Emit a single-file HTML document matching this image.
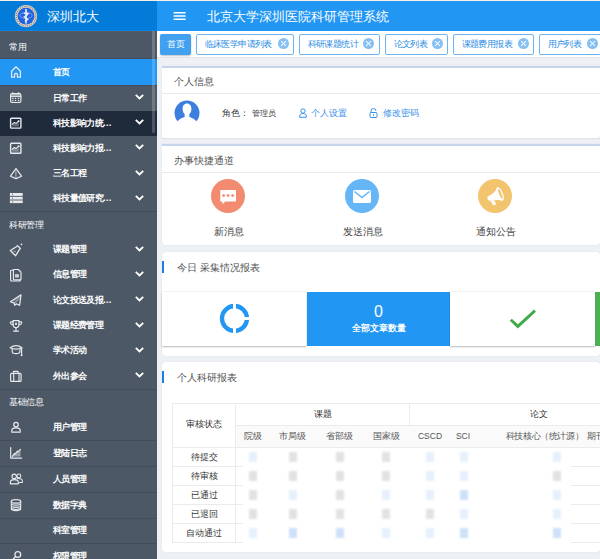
<!DOCTYPE html>
<html><head><meta charset="utf-8">
<style>
*{box-sizing:border-box;margin:0;padding:0}
html,body{width:600px;height:559px;overflow:hidden;background:#edf1f5;font-family:"Liberation Sans",sans-serif;}
.abs{position:absolute}
#side{position:absolute;left:0;top:31px;width:157px;height:528px;background:#4c5866;overflow:hidden}
.sec{position:absolute;left:0;width:157px;color:#fff;font-size:9px;padding-left:9px;letter-spacing:-0.3px;font-weight:500}
.it{position:absolute;left:0;width:157px;height:25px;color:#fff;font-size:9px;font-weight:bold}
.it .t{position:absolute;left:53px;top:0;line-height:25px;white-space:nowrap;letter-spacing:-0.7px}
.it svg.ic{position:absolute;left:10px}
.it .chev{position:absolute;left:135px;top:10px}
.bd{border-bottom:1px solid #414b57}
#hdr{position:absolute;left:0;top:0;width:600px;height:31px;background:#2196f3}
#logo{position:absolute;left:0;top:0;width:157px;height:31px;background:#027bd9}
.tab{position:absolute;top:34px;height:21px;border:1px solid #70b3ef;border-radius:2px;background:#fff;color:#2d8de4;font-size:9px;letter-spacing:-0.6px;line-height:19px;padding-left:7.5px;white-space:nowrap}
.tab .x{position:absolute;top:3px;width:11px;height:11px;border-radius:50%;background:#86bff2}
.tab .x:before,.tab .x:after{content:'';position:absolute;left:2px;top:5px;width:7px;height:1.1px;background:#fff;transform:rotate(45deg)}
.tab .x:after{transform:rotate(-45deg)}
.card{position:absolute;left:162px;width:438px;background:#fff;border-radius:3px;box-shadow:0 0 1px rgba(0,0,0,.18)}
.tc{text-align:center;white-space:nowrap}
.ctitle{position:absolute;left:12px;color:#505050;font-size:9.6px;white-space:nowrap}
</style></head><body>
<div id="hdr"></div>
<div id="logo">
 <svg class="abs" style="left:0;top:0" width="50" height="31" viewBox="0 0 50 31">
  <circle cx="26" cy="16.2" r="11.1" fill="#d9d1c6"/>
  <circle cx="26" cy="16.2" r="9.8" fill="none" stroke="#877e72" stroke-width="1.1" stroke-dasharray="1.1 1.1"/>
  <circle cx="26" cy="16.2" r="8.4" fill="#2262de"/>
  <ellipse cx="26" cy="15.5" rx="6.2" ry="3" fill="none" stroke="#8eaef0" stroke-width=".9"/>
  <path d="M26 9v14.5" stroke="#fff" stroke-width="1.5"/>
  <path d="M23.8 13.6Q26 12.4 28.2 13.6Q27 15.6 24.2 16.8Q26.5 18.6 27.8 19.4Q26 20.6 24.8 21" stroke="#e8f0ff" stroke-width="1.2" fill="none"/>
 </svg>
 <div class="abs" style="left:47px;top:8px;color:#fff;font-size:12.8px;line-height:18px;white-space:nowrap">深圳北大</div>
</div>
<svg class="abs" style="left:0;top:0" width="200" height="31" viewBox="0 0 200 31"><path d="M174.3 12.75H185M174.3 16H185M174.3 19.25H185" stroke="#fff" stroke-width="1.7" stroke-linecap="round"/></svg>
<div class="abs" style="left:207px;top:8px;color:#fff;font-size:12.9px;line-height:18px;white-space:nowrap">北京大学深圳医院科研管理系统</div>

<!-- tabs bar -->
<div class="abs" style="left:157px;top:31px;width:443px;height:27px;background:#fff;border-bottom:1px solid #e3e6ea"></div>
<div class="abs" style="left:160px;top:34px;width:31px;height:21px;background:#42a0f0;border-radius:2px;color:#fff;font-size:9px;line-height:21px;text-align:center;box-shadow:0 1px 2px rgba(0,0,0,.25)">首页</div>
<div class="tab" style="left:196px;width:98px">临床医学申请列表<span class="x" style="left:81px"></span></div>
<div class="tab" style="left:299px;width:81px">科研课题统计<span class="x" style="left:63px"></span></div>
<div class="tab" style="left:385px;width:63px">论文列表<span class="x" style="left:46px"></span></div>
<div class="tab" style="left:453px;width:81px">课题费用报表<span class="x" style="left:64px"></span></div>
<div class="tab" style="left:539px;width:70px">用户列表<span class="x" style="left:47px"></span></div>

<!-- card 1 -->
<div class="card" style="border-radius:0 0 3px 3px;top:66px;height:73px;border-top:2px solid #c8d4ec;border-bottom:1px solid #e0e4e8">
 <div class="ctitle" style="top:7.5px;line-height:12px">个人信息</div>
 <div class="abs" style="left:0;top:25px;width:438px;height:1px;background:#e8ebee"></div>
 <svg class="abs" style="left:12px;top:32px" width="26" height="26" viewBox="0 0 26 26">
  <circle cx="13" cy="13" r="12.5" fill="#3d7fdf"/>
  <path d="M13 3.4C10.1 3.4 8.6 5.7 8.6 8.8C8.6 11.2 9.4 13 10.7 14.2L10.6 17C8 17.8 5.6 18.8 3.6 21.2L1 26H25L22.4 21.2C20.4 18.8 18 17.8 15.4 17L15.3 14.2C16.6 13 17.4 11.2 17.4 8.8C17.4 5.7 15.9 3.4 13 3.4Z" fill="#fff"/>
 </svg>
 <div class="ctitle" style="left:60px;top:39px;line-height:12px;font-size:8.5px;color:#333">角色：</div><div class="ctitle" style="left:90px;top:39px;line-height:12px;font-size:8.3px;color:#333">管理员</div>
 <svg class="abs" style="left:137px;top:40px" width="8" height="10" viewBox="0 0 8 10"><circle cx="4" cy="3" r="2.2" fill="none" stroke="#3a92ea" stroke-width="1"/><path d="M.7 9.3V8c0-1.5 1.3-2.5 3.3-2.5S7.3 6.5 7.3 8v1.3z" fill="none" stroke="#3a92ea" stroke-width="1"/></svg>
 <div class="ctitle" style="left:149px;top:39px;line-height:12px;font-size:9.3px;color:#3a92ea">个人设置</div>
 <svg class="abs" style="left:207px;top:40px" width="9" height="10" viewBox="0 0 9 10"><path d="M2 4.5V3a2.5 2.5 0 0 1 5 0" fill="none" stroke="#3a92ea" stroke-width="1"/><rect x="1" y="4.5" width="7" height="5" rx="1" fill="none" stroke="#3a92ea" stroke-width="1"/><path d="M4.5 6.2v1.6" stroke="#3a92ea" stroke-width="1"/></svg>
 <div class="ctitle" style="left:221px;top:39px;line-height:12px;font-size:8.8px;color:#3a92ea">修改密码</div>
</div>

<!-- card 2 -->
<div class="card" style="border-radius:0 0 3px 3px;top:144px;height:101px;border-top:2px solid #c8d4ec">
 <div class="ctitle" style="top:9px;line-height:12px">办事快捷通道</div>
 <div class="abs" style="left:0;top:26px;width:438px;height:1px;background:#e8ebee"></div>
 <div class="abs" style="left:49px;top:33px;width:34px;height:34px;border-radius:50%;background:#f28b70"></div>
 <svg class="abs" style="left:56px;top:40px" width="20" height="20" viewBox="0 0 20 20"><path d="M2.3 4h15.7v11.6H7.2L4.5 18.2V15.6H2.3z" fill="#fff"/><circle cx="5.6" cy="9.6" r="1.45" fill="#f28b70"/><circle cx="10.1" cy="9.6" r="1.45" fill="#f28b70"/><circle cx="14.6" cy="9.6" r="1.45" fill="#f28b70"/></svg>
 <div class="ctitle" style="left:52px;top:80px;line-height:12px;font-size:9.6px;color:#444">新消息</div>
 <div class="abs" style="left:183px;top:33px;width:34px;height:34px;border-radius:50%;background:#65b6f7"></div>
 <svg class="abs" style="left:191px;top:44px" width="18" height="13" viewBox="0 0 18 13"><rect x="0" y="0" width="18" height="13" rx="1.5" fill="#fff"/><path d="M1.5 1.5l7.5 6 7.5-6" stroke="#65b6f7" stroke-width="1.6" fill="none"/></svg>
 <div class="ctitle" style="left:181px;top:80px;line-height:12px;font-size:9.6px;color:#444">发送消息</div>
 <div class="abs" style="left:316px;top:33px;width:34px;height:34px;border-radius:50%;background:#f2c46e"></div>
 <svg class="abs" style="left:311px;top:29px" width="45" height="40" viewBox="473 175 45 40"><path d="M487.6 196.4Q493.5 194.5 497.6 187.6L502.6 200.4Q496 199.2 490.4 200.8Q486.6 200.6 487.6 196.4z" fill="#fff"/><path d="M490.3 200.2L493.2 205.6L496.2 204.2L494.3 200.2z" fill="#fff"/><ellipse cx="500" cy="194" rx="3" ry="7.3" transform="rotate(-22 500 194)" fill="#fff"/><ellipse cx="500.4" cy="194" rx="1.2" ry="5.2" transform="rotate(-22 500 194)" fill="#f2c46e"/></svg>
 <div class="ctitle" style="left:314px;top:80px;line-height:12px;font-size:9.6px;color:#444">通知公告</div>
</div>

<!-- card 3 -->
<div class="card" style="top:252px;height:104px">
 <div class="abs" style="left:0;top:9px;width:2px;height:12px;background:#1a7fe0"></div>
 <div class="ctitle" style="left:15px;top:10px;line-height:12px">今日 采集情况报表</div>
 <div class="abs" style="left:0;top:40px;width:144px;height:54px;background:#fff;box-shadow:0 1px 1.5px rgba(0,0,0,.28)"></div><div class="abs" style="left:1px;top:39px;width:143px;height:1px;background:#f2f2f2"></div>
 <svg class="abs" style="left:57px;top:51.4px" width="31" height="31" viewBox="0 0 31 31">
  <circle cx="15.5" cy="15.5" r="12.5" fill="none" stroke="#2196f3" stroke-width="4.3"/>
  <rect x="14" y="0" width="3" height="31" fill="#fff"/>
  <rect x="16" y="14" width="15" height="3" fill="#fff"/>
 </svg>
 <div class="abs" style="left:145px;top:40px;width:143px;height:54px;background:#2196f3;color:#fff;text-align:center">
  <div style="font-size:16px;line-height:16px;margin-top:12px">0</div>
  <div style="font-size:8.7px;font-weight:bold;line-height:12px;margin-top:1.5px">全部文章数量</div>
 </div>
 <div class="abs" style="left:288px;top:40px;width:145px;height:54px;background:#fff;box-shadow:0 1px 1.5px rgba(0,0,0,.28)"></div><div class="abs" style="left:289px;top:39px;width:143px;height:1px;background:#f2f2f2"></div>
 <svg class="abs" style="left:347px;top:56px" width="28" height="22" viewBox="0 0 28 22"><path d="M1.8 11.8l7 6.6L26 2.6" stroke="#40aa4a" stroke-width="2.9" fill="none"/></svg>
 <div class="abs" style="left:432.5px;top:40px;width:11px;height:54px;background:#4caf50"></div>
</div>

<!-- card 4 -->
<div class="card" style="top:362px;height:190px">
 <div class="abs" style="left:0;top:9px;width:2px;height:12px;background:#1a7fe0"></div>
 <div class="ctitle" style="left:15px;top:10px;line-height:12px">个人科研报表</div>
<!--T-->
<div class="abs" style="left:74.0px;top:63.0px;width:364.0px;height:22.0px;background:#fafafa"></div>
<div class="abs" style="left:10.0px;top:41.0px;width:428.0px;height:1.0px;background:#e9ebee"></div>
<div class="abs" style="left:74.0px;top:63.0px;width:364.0px;height:1.0px;background:#e9ebee"></div>
<div class="abs" style="left:10.0px;top:85.0px;width:428.0px;height:1.0px;background:#e9ebee"></div>
<div class="abs" style="left:10.0px;top:104.0px;width:71.0px;height:1.0px;background:#e9ebee"></div>
<div class="abs" style="left:409.0px;top:104.0px;width:29.0px;height:1.0px;background:#e9ebee"></div>
<div class="abs" style="left:10.0px;top:123.0px;width:71.0px;height:1.0px;background:#e9ebee"></div>
<div class="abs" style="left:409.0px;top:123.0px;width:29.0px;height:1.0px;background:#e9ebee"></div>
<div class="abs" style="left:10.0px;top:142.0px;width:71.0px;height:1.0px;background:#e9ebee"></div>
<div class="abs" style="left:409.0px;top:142.0px;width:29.0px;height:1.0px;background:#e9ebee"></div>
<div class="abs" style="left:10.0px;top:161.0px;width:71.0px;height:1.0px;background:#e9ebee"></div>
<div class="abs" style="left:409.0px;top:161.0px;width:29.0px;height:1.0px;background:#e9ebee"></div>
<div class="abs" style="left:10.0px;top:180.0px;width:71.0px;height:1.0px;background:#e9ebee"></div>
<div class="abs" style="left:409.0px;top:180.0px;width:29.0px;height:1.0px;background:#e9ebee"></div>
<div class="abs" style="left:10.0px;top:41.0px;width:1.0px;height:140.0px;background:#e9ebee"></div>
<div class="abs" style="left:73.0px;top:41.0px;width:1.0px;height:140.0px;background:#e9ebee"></div>
<div class="abs" style="left:247.0px;top:41.0px;width:1.0px;height:22.0px;background:#e9ebee"></div>
<div class="abs tc" style="left:42.0px;top:62.4px;width:200px;margin-left:-100px;line-height:12px;margin-top:-6px;font-size:8.5px;color:#333;">审核状态</div>
<div class="abs tc" style="left:160.7px;top:51.5px;width:200px;margin-left:-100px;line-height:12px;margin-top:-6px;font-size:8.5px;color:#333;">课题</div>
<div class="abs tc" style="left:377.2px;top:51.5px;width:200px;margin-left:-100px;line-height:12px;margin-top:-6px;font-size:8.5px;color:#333;">论文</div>
<div class="abs tc" style="left:90.5px;top:74.0px;width:200px;margin-left:-100px;line-height:12px;margin-top:-6px;font-size:8.5px;color:#555;">院级</div>
<div class="abs tc" style="left:130.5px;top:74.0px;width:200px;margin-left:-100px;line-height:12px;margin-top:-6px;font-size:8.5px;color:#555;">市局级</div>
<div class="abs tc" style="left:177.5px;top:74.0px;width:200px;margin-left:-100px;line-height:12px;margin-top:-6px;font-size:8.5px;color:#555;">省部级</div>
<div class="abs tc" style="left:224.0px;top:74.0px;width:200px;margin-left:-100px;line-height:12px;margin-top:-6px;font-size:8.5px;color:#555;">国家级</div>
<div class="abs tc" style="left:268.0px;top:74.0px;width:200px;margin-left:-100px;line-height:12px;margin-top:-6px;font-size:8.5px;color:#555;">CSCD</div>
<div class="abs tc" style="left:301.0px;top:74.0px;width:200px;margin-left:-100px;line-height:12px;margin-top:-6px;font-size:8.5px;color:#555;">SCI</div>
<div class="abs tc" style="left:382.5px;top:74.0px;width:200px;margin-left:-100px;line-height:12px;margin-top:-6px;font-size:8.5px;color:#555;letter-spacing:-0.35px">科技核心（统计源）</div>
<div class="abs" style="left:425.0px;top:68.0px;line-height:12px;font-size:8.5px;color:#555;white-space:nowrap">期刊</div>
<div class="abs tc" style="left:42.0px;top:95.0px;width:200px;margin-left:-100px;line-height:12px;margin-top:-6px;font-size:8.5px;color:#333;">待提交</div>
<div class="abs tc" style="left:42.0px;top:114.0px;width:200px;margin-left:-100px;line-height:12px;margin-top:-6px;font-size:8.5px;color:#333;">待审核</div>
<div class="abs tc" style="left:42.0px;top:133.0px;width:200px;margin-left:-100px;line-height:12px;margin-top:-6px;font-size:8.5px;color:#333;">已通过</div>
<div class="abs tc" style="left:42.0px;top:152.0px;width:200px;margin-left:-100px;line-height:12px;margin-top:-6px;font-size:8.5px;color:#333;">已退回</div>
<div class="abs tc" style="left:42.0px;top:171.0px;width:200px;margin-left:-100px;line-height:12px;margin-top:-6px;font-size:8.5px;color:#333;">自动通过</div>
<div class="abs" style="left:86.5px;top:90.0px;width:8.0px;height:10.0px;background:#e5f0fc;filter:blur(1.3px)"></div>
<div class="abs" style="left:126.5px;top:90.0px;width:8.0px;height:10.0px;background:#e2e2e2;filter:blur(1.3px)"></div>
<div class="abs" style="left:173.5px;top:90.0px;width:8.0px;height:10.0px;background:#e2e2e2;filter:blur(1.3px)"></div>
<div class="abs" style="left:220.0px;top:90.0px;width:8.0px;height:10.0px;background:#e2e2e2;filter:blur(1.3px)"></div>
<div class="abs" style="left:264.0px;top:90.0px;width:8.0px;height:10.0px;background:#e5f0fc;filter:blur(1.3px)"></div>
<div class="abs" style="left:297.5px;top:90.0px;width:8.0px;height:10.0px;background:#e5f0fc;filter:blur(1.3px)"></div>
<div class="abs" style="left:390.5px;top:90.0px;width:8.0px;height:10.0px;background:#e5f0fc;filter:blur(1.3px)"></div>
<div class="abs" style="left:86.5px;top:109.0px;width:8.0px;height:10.0px;background:#e2e2e2;filter:blur(1.3px)"></div>
<div class="abs" style="left:126.5px;top:109.0px;width:8.0px;height:10.0px;background:#e2e2e2;filter:blur(1.3px)"></div>
<div class="abs" style="left:173.5px;top:109.0px;width:8.0px;height:10.0px;background:#e2e2e2;filter:blur(1.3px)"></div>
<div class="abs" style="left:220.0px;top:109.0px;width:8.0px;height:10.0px;background:#e2e2e2;filter:blur(1.3px)"></div>
<div class="abs" style="left:264.0px;top:109.0px;width:8.0px;height:10.0px;background:#e5f0fc;filter:blur(1.3px)"></div>
<div class="abs" style="left:297.5px;top:109.0px;width:8.0px;height:10.0px;background:#e5f0fc;filter:blur(1.3px)"></div>
<div class="abs" style="left:390.5px;top:109.0px;width:8.0px;height:10.0px;background:#e2e2e2;filter:blur(1.3px)"></div>
<div class="abs" style="left:86.5px;top:128.0px;width:8.0px;height:10.0px;background:#e2e2e2;filter:blur(1.3px)"></div>
<div class="abs" style="left:126.5px;top:128.0px;width:8.0px;height:10.0px;background:#e5f0fc;filter:blur(1.3px)"></div>
<div class="abs" style="left:173.5px;top:128.0px;width:8.0px;height:10.0px;background:#e2e2e2;filter:blur(1.3px)"></div>
<div class="abs" style="left:220.0px;top:128.0px;width:8.0px;height:10.0px;background:#e5f0fc;filter:blur(1.3px)"></div>
<div class="abs" style="left:264.0px;top:128.0px;width:8.0px;height:10.0px;background:#e5f0fc;filter:blur(1.3px)"></div>
<div class="abs" style="left:297.5px;top:128.0px;width:8.0px;height:10.0px;background:#cce1f9;filter:blur(1.3px)"></div>
<div class="abs" style="left:390.5px;top:128.0px;width:8.0px;height:10.0px;background:#e5f0fc;filter:blur(1.3px)"></div>
<div class="abs" style="left:86.5px;top:147.0px;width:8.0px;height:10.0px;background:#e2e2e2;filter:blur(1.3px)"></div>
<div class="abs" style="left:126.5px;top:147.0px;width:8.0px;height:10.0px;background:#e2e2e2;filter:blur(1.3px)"></div>
<div class="abs" style="left:173.5px;top:147.0px;width:8.0px;height:10.0px;background:#e2e2e2;filter:blur(1.3px)"></div>
<div class="abs" style="left:220.0px;top:147.0px;width:8.0px;height:10.0px;background:#e2e2e2;filter:blur(1.3px)"></div>
<div class="abs" style="left:264.0px;top:147.0px;width:8.0px;height:10.0px;background:#e2e2e2;filter:blur(1.3px)"></div>
<div class="abs" style="left:297.5px;top:147.0px;width:8.0px;height:10.0px;background:#e5f0fc;filter:blur(1.3px)"></div>
<div class="abs" style="left:390.5px;top:147.0px;width:8.0px;height:10.0px;background:#e5f0fc;filter:blur(1.3px)"></div>
<div class="abs" style="left:86.5px;top:166.0px;width:8.0px;height:10.0px;background:#e5f0fc;filter:blur(1.3px)"></div>
<div class="abs" style="left:126.5px;top:166.0px;width:8.0px;height:10.0px;background:#cce1f9;filter:blur(1.3px)"></div>
<div class="abs" style="left:173.5px;top:166.0px;width:8.0px;height:10.0px;background:#cce1f9;filter:blur(1.3px)"></div>
<div class="abs" style="left:220.0px;top:166.0px;width:8.0px;height:10.0px;background:#e5f0fc;filter:blur(1.3px)"></div>
<div class="abs" style="left:264.0px;top:166.0px;width:8.0px;height:10.0px;background:#e5f0fc;filter:blur(1.3px)"></div>
<div class="abs" style="left:297.5px;top:166.0px;width:8.0px;height:10.0px;background:#cce1f9;filter:blur(1.3px)"></div>
<div class="abs" style="left:390.5px;top:166.0px;width:8.0px;height:10.0px;background:#cce1f9;filter:blur(1.3px)"></div>
<!--/T--></div>

<!-- sidebar -->
<div id="side">
<div class="sec" style="top:0.00px;height:27.00px;line-height:27.00px;padding-top:3px">常用</div>
<div class="it" style="top:28.00px;height:26.00px;background:#2196f3"><span class="t" style="line-height:26.00px">首页</span></div>
<div class="it" style="top:54.70px;height:25.10px"><span class="t" style="line-height:25.10px">日常工作</span><svg class="chev" style="top:8.6px" width="9" height="6" viewBox="0 0 9 6"><path d="M.8 .8L4.5 4.5 8.2 .8" stroke="#fff" stroke-width="1.8" fill="none"/></svg></div>
<div class="it" style="top:79.80px;height:25.10px;background:#1f2a3a"><span class="t" style="line-height:25.10px">科技影响力统…</span><svg class="chev" style="top:8.6px" width="9" height="6" viewBox="0 0 9 6"><path d="M.8 .8L4.5 4.5 8.2 .8" stroke="#fff" stroke-width="1.8" fill="none"/></svg></div>
<div class="it" style="top:104.90px;height:25.10px"><span class="t" style="line-height:25.10px">科技影响力报…</span><svg class="chev" style="top:8.6px" width="9" height="6" viewBox="0 0 9 6"><path d="M.8 .8L4.5 4.5 8.2 .8" stroke="#fff" stroke-width="1.8" fill="none"/></svg></div>
<div class="it" style="top:130.00px;height:25.10px"><span class="t" style="line-height:25.10px">三名工程</span><svg class="chev" style="top:8.6px" width="9" height="6" viewBox="0 0 9 6"><path d="M.8 .8L4.5 4.5 8.2 .8" stroke="#fff" stroke-width="1.8" fill="none"/></svg></div>
<div class="it" style="top:155.10px;height:25.10px"><span class="t" style="line-height:25.10px">科技量值研究…</span><svg class="chev" style="top:8.6px" width="9" height="6" viewBox="0 0 9 6"><path d="M.8 .8L4.5 4.5 8.2 .8" stroke="#fff" stroke-width="1.8" fill="none"/></svg></div>
<div class="sec" style="top:180.00px;height:26.00px;line-height:26.00px;padding-top:1px">科研管理</div>
<div class="it" style="top:206.00px;height:25.33px"><span class="t" style="line-height:25.33px">课题管理</span><svg class="chev" style="top:8.7px" width="9" height="6" viewBox="0 0 9 6"><path d="M.8 .8L4.5 4.5 8.2 .8" stroke="#fff" stroke-width="1.8" fill="none"/></svg></div>
<div class="it" style="top:231.33px;height:25.33px"><span class="t" style="line-height:25.33px">信息管理</span><svg class="chev" style="top:8.7px" width="9" height="6" viewBox="0 0 9 6"><path d="M.8 .8L4.5 4.5 8.2 .8" stroke="#fff" stroke-width="1.8" fill="none"/></svg></div>
<div class="it" style="top:256.67px;height:25.33px"><span class="t" style="line-height:25.33px">论文投送及报…</span><svg class="chev" style="top:8.7px" width="9" height="6" viewBox="0 0 9 6"><path d="M.8 .8L4.5 4.5 8.2 .8" stroke="#fff" stroke-width="1.8" fill="none"/></svg></div>
<div class="it" style="top:282.00px;height:25.33px"><span class="t" style="line-height:25.33px">课题经费管理</span><svg class="chev" style="top:8.7px" width="9" height="6" viewBox="0 0 9 6"><path d="M.8 .8L4.5 4.5 8.2 .8" stroke="#fff" stroke-width="1.8" fill="none"/></svg></div>
<div class="it" style="top:307.33px;height:25.33px"><span class="t" style="line-height:25.33px">学术活动</span><svg class="chev" style="top:8.7px" width="9" height="6" viewBox="0 0 9 6"><path d="M.8 .8L4.5 4.5 8.2 .8" stroke="#fff" stroke-width="1.8" fill="none"/></svg></div>
<div class="it" style="top:332.67px;height:25.33px"><span class="t" style="line-height:25.33px">外出参会</span><svg class="chev" style="top:8.7px" width="9" height="6" viewBox="0 0 9 6"><path d="M.8 .8L4.5 4.5 8.2 .8" stroke="#fff" stroke-width="1.8" fill="none"/></svg></div>
<div class="sec" style="top:358.50px;height:25.00px;line-height:25.00px;padding-top:0px">基础信息</div>
<div class="it" style="top:383.00px;height:26.00px"><span class="t" style="line-height:26.00px">用户管理</span></div>
<div class="it" style="top:409.00px;height:26.00px"><span class="t" style="line-height:26.00px">登陆日志</span></div>
<div class="it" style="top:435.00px;height:26.00px"><span class="t" style="line-height:26.00px">人员管理</span></div>
<div class="it" style="top:461.00px;height:26.00px"><span class="t" style="line-height:26.00px">数据字典</span></div>
<div class="it" style="top:487.00px;height:25.00px"><span class="t" style="line-height:25.00px">科室管理</span></div>
<div class="it" style="top:512.00px;height:26.00px"><span class="t" style="line-height:26.00px">权限管理</span></div>
<div class="abs" style="left:0;top:27.0px;width:157px;height:1px;background:#434d59"></div>
<div class="abs" style="left:0;top:54.0px;width:157px;height:1px;background:#434d59"></div>
<div class="abs" style="left:0;top:179.5px;width:157px;height:1px;background:#434d59"></div>
<div class="abs" style="left:0;top:358.0px;width:157px;height:1px;background:#434d59"></div>
<div class="abs" style="left:0;top:408.7px;width:157px;height:1px;background:#434d59"></div>
<div class="abs" style="left:0;top:434.8px;width:157px;height:1px;background:#434d59"></div>
<div class="abs" style="left:0;top:460.8px;width:157px;height:1px;background:#434d59"></div>
<div class="abs" style="left:0;top:486.7px;width:157px;height:1px;background:#434d59"></div>
<div class="abs" style="left:0;top:512.0px;width:157px;height:1px;background:#434d59"></div>
<div class="abs" style="left:152px;top:0;width:3px;height:102px;border-radius:0 0 2px 2px;background:rgba(255,255,255,.2)"></div>
</div><!--/side-->
<div class="abs" style="left:0;top:0;width:600px;height:1px;background:#f9efe6"></div>
<div class="abs" style="left:0;top:30px;width:157px;height:1px;background:#0884e8"></div>
<div class="abs" style="left:0;top:31px;width:152px;height:1px;background:#565b62"></div>
<svg id="icons" style="position:absolute;left:0;top:0" width="157" height="559" viewBox="0 0 157 559"><path d="M11.6 71.2L16 66.8 20.4 71.2V77.2H17.4V74.2Q17.4 73.3 16.5 73.3H15.5Q14.6 73.3 14.6 74.2V77.2H11.6Z" fill="none" stroke="#e8eaed" stroke-width="1.25" stroke-linejoin="round" stroke-linecap="round"/><rect x="10.6" y="93.6" width="10.3" height="8.9" rx="1.4" fill="none" stroke="#e8eaed" stroke-width="1.15" stroke-linejoin="round" stroke-linecap="round"/><rect x="11" y="94" width="9.5" height="2.4" fill="#e8eaed" opacity=".55"/><path d="M10.6 96.6H20.9" fill="none" stroke="#e8eaed" stroke-width="1.00" stroke-linejoin="round" stroke-linecap="round"/><circle cx="12.9" cy="93.2" r=".9" fill="#e8eaed"/><circle cx="18.5" cy="93.2" r=".9" fill="#e8eaed"/><rect x="12.2" y="97.9" width="1.3" height="1.2" fill="#e8eaed"/><rect x="12.2" y="100.0" width="1.3" height="1.2" fill="#e8eaed"/><rect x="14.9" y="97.9" width="1.3" height="1.2" fill="#e8eaed"/><rect x="14.9" y="100.0" width="1.3" height="1.2" fill="#e8eaed"/><rect x="17.9" y="97.9" width="1.3" height="1.2" fill="#e8eaed"/><rect x="17.9" y="100.0" width="1.3" height="1.2" fill="#e8eaed"/><rect x="10.6" y="118.2" width="10.3" height="9.9" rx=".8" fill="none" stroke="#e8eaed" stroke-width="1.40" stroke-linejoin="round" stroke-linecap="round"/><path d="M12.3 124.2L14.4 122.4 16 123.6 18.6 121.2" fill="none" stroke="#e8eaed" stroke-width="1.15" stroke-linejoin="round" stroke-linecap="round"/><path d="M12.3 125.0L14.4 123.6 16 124.6 18.8 122.6 V126.6 H12.3Z" fill="#e8eaed" opacity=".35"/><circle cx="18.6" cy="121.2" r="1" fill="#e8eaed"/><rect x="10.6" y="143.3" width="10.3" height="9.9" rx=".8" fill="none" stroke="#e8eaed" stroke-width="1.40" stroke-linejoin="round" stroke-linecap="round"/><path d="M12.3 149.3L14.4 147.5 16 148.7 18.6 146.3" fill="none" stroke="#e8eaed" stroke-width="1.15" stroke-linejoin="round" stroke-linecap="round"/><path d="M12.3 150.1L14.4 148.7 16 149.7 18.8 147.7 V151.7 H12.3Z" fill="#e8eaed" opacity=".35"/><circle cx="18.6" cy="146.3" r="1" fill="#e8eaed"/><path d="M16 168.6L21.5 176.2 16 178.6 10.5 176.2Z" fill="none" stroke="#e8eaed" stroke-width="1.25" stroke-linejoin="round" stroke-linecap="round"/><path d="M15.9 171.2V177.2" stroke="#a5abb2" stroke-width="1.3"/><rect x="9.9" y="193.0" width="12.8" height="2.9" fill="#e8eaed"/><rect x="12" y="193.7" width=".9" height="1.6" fill="#6d757e"/><rect x="9.9" y="196.8" width="12.8" height="2.7" fill="#e8eaed"/><rect x="12" y="197.5" width=".9" height="1.4" fill="#6d757e"/><rect x="9.9" y="200.5" width="12.8" height="2.6" fill="#e8eaed"/><rect x="12" y="201.2" width=".9" height="1.3" fill="#6d757e"/><rect x="9.9" y="199.5" width="12.8" height="1" fill="#a9afb6"/><path d="M10.3 250.5L15.6 255.8 19.3 249.6 20.4 248.5 17.5 245.6 16.4 246.7Z" fill="none" stroke="#e8eaed" stroke-width="1.25" stroke-linejoin="round" stroke-linecap="round"/><path d="M13 251L16 251.5" stroke="#a0a6ad" stroke-width="1"/><circle cx="21.5" cy="244.3" r=".9" fill="#e8eaed"/><path d="M12.8 270.2H11.4Q10.6 270.2 10.6 271V280.2Q10.6 281 11.4 281H19.6Q20.4 281 20.4 280.2V279.9" fill="none" stroke="#e8eaed" stroke-width="1.15" stroke-linejoin="round" stroke-linecap="round"/><path d="M13.4 269.5H18.3L21 272.2V279.1Q21 279.8 20.3 279.8H14.1Q13.4 279.8 13.4 279.1Z" fill="none" stroke="#e8eaed" stroke-width="1.15" stroke-linejoin="round" stroke-linecap="round"/><rect x="14.9" y="274.2" width="4" height="3.3" fill="#e8eaed" opacity=".85"/><path d="M21 294.8L10.4 301.8 14.2 303.1 14.7 305.3 16.2 303.9 19.6 305.3Z" fill="none" stroke="#e8eaed" stroke-width="1.20" stroke-linejoin="round" stroke-linecap="round"/><path d="M21 294.8L14.2 303.1M13 301.2L19 297M15 303.2L19.8 298" stroke="#e8eaed" stroke-width=".8" opacity=".6"/><path d="M13.1 320.6H19V324.2Q19 327.6 16 327.6Q13.1 327.6 13.1 324.2Z" fill="none" stroke="#e8eaed" stroke-width="1.20" stroke-linejoin="round" stroke-linecap="round"/><path d="M13.1 321.8H11.1Q10.2 321.8 10.4 322.8Q10.8 324.6 13.2 325M19 321.8H21Q21.9 321.8 21.7 322.8Q21.3 324.6 18.9 325M16 327.8V330.2M13.6 331.1H18.5" fill="none" stroke="#e8eaed" stroke-width="1.15" stroke-linejoin="round" stroke-linecap="round"/><circle cx="16" cy="323.9" r="1.15" fill="#e8eaed"/><path d="M10.2 347.8Q16 343.4 22 347.8Q16 350.4 10.2 347.8Z" fill="none" stroke="#e8eaed" stroke-width="1.20" stroke-linejoin="round" stroke-linecap="round"/><path d="M12.2 349V351.8Q12.2 353.6 16 353.6Q19.9 353.6 19.9 351.8V349M21.6 347.9V354.2" fill="none" stroke="#e8eaed" stroke-width="1.15" stroke-linejoin="round" stroke-linecap="round"/><circle cx="21.6" cy="355.2" r="1" fill="#e8eaed"/><rect x="10.6" y="373.4" width="10.5" height="8" rx="1" fill="none" stroke="#e8eaed" stroke-width="1.15" stroke-linejoin="round" stroke-linecap="round"/><path d="M13.4 373.4V371.9Q13.4 371.4 13.9 371.4H17.7Q18.2 371.4 18.2 371.9V373.4M13.7 373.6V381.2M19 373.6V381.2" fill="none" stroke="#e8eaed" stroke-width="1.10" stroke-linejoin="round" stroke-linecap="round"/><circle cx="16" cy="424.6" r="2.3" fill="none" stroke="#e8eaed" stroke-width="1.20" stroke-linejoin="round" stroke-linecap="round"/><path d="M11.8 432.2V430.2Q11.8 427.8 16 427.8Q20.2 427.8 20.2 430.2V432.2Z" fill="none" stroke="#e8eaed" stroke-width="1.20" stroke-linejoin="round" stroke-linecap="round"/><path d="M10.7 447.6V458.1H21.7" fill="none" stroke="#e8eaed" stroke-width="1.15" stroke-linejoin="round" stroke-linecap="round"/><path d="M12.4 456.4L14.6 453.4 15.4 453.9 17.4 451.2 18.2 451.6 20.5 449.3V456.6H12.4Z" fill="#e8eaed" opacity=".45"/><path d="M12.4 456.4L14.6 453.4 15.4 453.9 17.4 451.2 18.2 451.6 20.5 449.3" fill="none" stroke="#e8eaed" stroke-width="1.20" stroke-linejoin="round" stroke-linecap="round"/><circle cx="14.2" cy="476.4" r="2.2" fill="none" stroke="#e8eaed" stroke-width="1.15" stroke-linejoin="round" stroke-linecap="round"/><circle cx="18.9" cy="475.9" r="1.9" fill="none" stroke="#e8eaed" stroke-width="1.05" stroke-linejoin="round" stroke-linecap="round"/><path d="M10.4 483.8V482Q10.4 479.6 14.3 479.6Q18.3 479.6 18.3 482V483.8Z" fill="none" stroke="#e8eaed" stroke-width="1.15" stroke-linejoin="round" stroke-linecap="round"/><path d="M17.5 478.6Q22.3 478.2 22.3 480.8V482.4H18.8" fill="none" stroke="#e8eaed" stroke-width="1.05" stroke-linejoin="round" stroke-linecap="round"/><ellipse cx="16" cy="501.4" rx="4.7" ry="1.7" fill="none" stroke="#e8eaed" stroke-width="1.15" stroke-linejoin="round" stroke-linecap="round"/><path d="M11.3 501.4V509Q11.3 510.6 16 510.6Q20.7 510.6 20.7 509V501.4M11.3 504.2Q16 506 20.7 504.2M11.3 506.5Q16 508.2 20.7 506.5M11.3 508.6Q16 510.3 20.7 508.6" fill="none" stroke="#e8eaed" stroke-width="1.05" stroke-linejoin="round" stroke-linecap="round"/><circle cx="17.8" cy="554.4" r="2.9" fill="none" stroke="#e8eaed" stroke-width="1.25" stroke-linejoin="round" stroke-linecap="round"/><path d="M15.8 556.4L11.5 560.7" fill="none" stroke="#e8eaed" stroke-width="1.30" stroke-linejoin="round" stroke-linecap="round"/></svg>
</body></html>
